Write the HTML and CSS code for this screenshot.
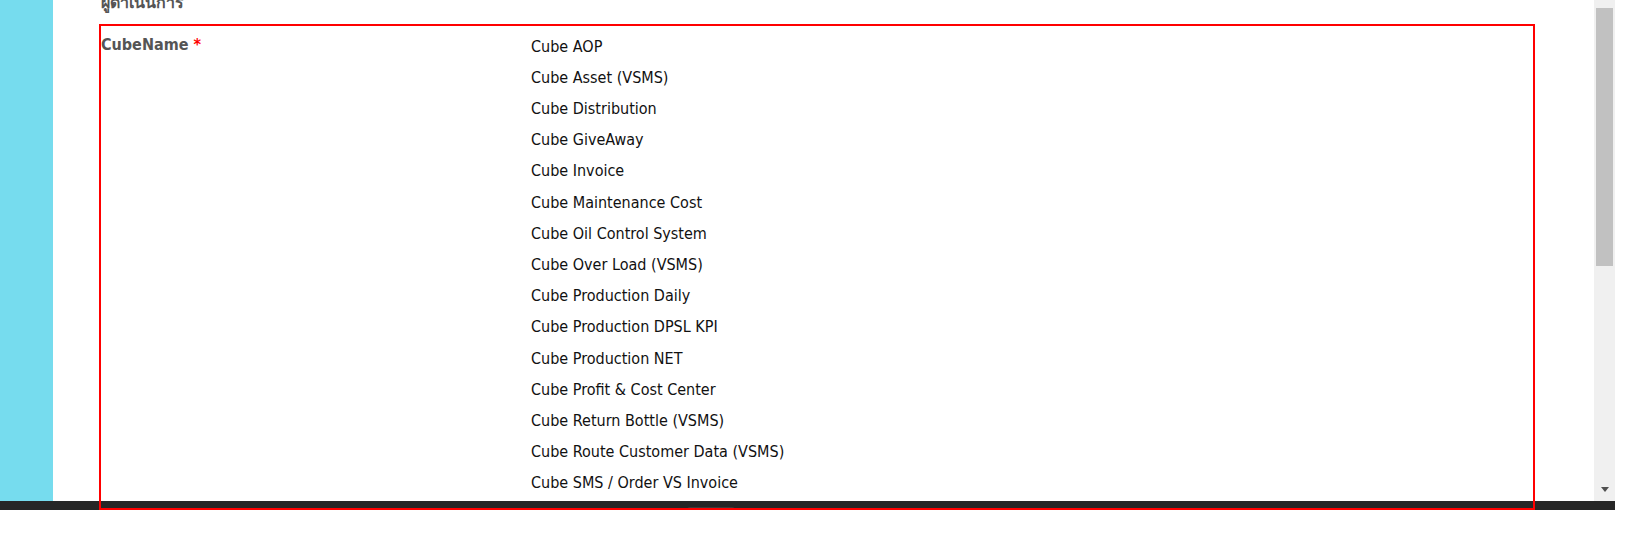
FILE: index.html
```html
<!DOCTYPE html>
<html lang="th">
<head>
<meta charset="utf-8">
<title>CubeName</title>
<link rel="stylesheet" href="styles.css">
</head>
<body>
<div class="frame">
  <div class="viewport">
    <aside class="sidebar"></aside>
    <main class="content">
      <div class="section-title">ผู้ดำเนินการ</div>
      <div class="field">
        <label class="field-label">CubeName <span class="req">*</span></label>
        <ul class="options">
          <li>Cube AOP</li>
          <li>Cube Asset (VSMS)</li>
          <li>Cube Distribution</li>
          <li>Cube GiveAway</li>
          <li>Cube Invoice</li>
          <li>Cube Maintenance Cost</li>
          <li>Cube Oil Control System</li>
          <li>Cube Over Load (VSMS)</li>
          <li>Cube Production Daily</li>
          <li>Cube Production DPSL KPI</li>
          <li>Cube Production NET</li>
          <li>Cube Profit &amp; Cost Center</li>
          <li>Cube Return Bottle (VSMS)</li>
          <li>Cube Route Customer Data (VSMS)</li>
          <li>Cube SMS / Order VS Invoice</li>
        </ul>
      </div>
    </main>
    <div class="vscroll">
      <div class="vscroll-thumb"></div>
      <div class="vscroll-arrow"></div>
    </div>
  </div>
  <div class="hbar"><div class="hbar-tab"></div></div>
</div>
<div class="highlight"></div>
</body>
</html>
```

FILE: styles.css
```css
html, body {
  margin: 0;
  padding: 0;
  background: #ffffff;
}

body {
  width: 1635px;
  height: 535px;
  overflow: hidden;
  position: relative;
  font-family: "DejaVu Sans Condensed", "DejaVu Sans", sans-serif;
  font-stretch: condensed;
  font-size: 16px;
}

.frame {
  width: 1615px;
  height: 510px;
  display: flex;
  flex-direction: column;
}

.viewport {
  height: 501px;
  display: flex;
  flex-direction: row;
}

.sidebar {
  width: 53px;
  flex: 0 0 53px;
  background: #76dcee;
}

.content {
  flex: 1 1 auto;
  overflow: hidden;
  background: #ffffff;
  padding-left: 48px;
}

.section-title {
  font-weight: bold;
  color: #555555;
  line-height: 18px;
  margin-top: -6px;
}

.field {
  display: flex;
  flex-direction: row;
  padding-top: 17px;
}

.field-label {
  width: 430px;
  flex: 0 0 430px;
  font-weight: bold;
  color: #555555;
  line-height: 31.2px;
}

.req {
  color: #ff0000;
}

.options {
  list-style: none;
  margin: 0;
  padding: 1.5px 0 0 0;
  color: #111111;
  line-height: 31.2px;
}

.vscroll {
  width: 21px;
  flex: 0 0 21px;
  background: #f0f0f0;
  display: flex;
  flex-direction: column;
  align-items: center;
  box-sizing: border-box;
  padding-top: 8px;
}

.vscroll-thumb {
  width: 17px;
  height: 258px;
  background: #c1c1c1;
}

.vscroll-arrow {
  margin-top: auto;
  margin-bottom: 9px;
  width: 0;
  height: 0;
  border-left: 4.5px solid transparent;
  border-right: 4.5px solid transparent;
  border-top: 5px solid #505050;
}

.hbar {
  height: 9px;
  background: #262626;
  display: flex;
  padding-left: 687px;
  align-items: flex-end;
}

.hbar-tab {
  width: 48px;
  height: 3px;
  background: #3a3a3a;
  border-radius: 4px 4px 0 0;
}

.highlight {
  position: absolute;
  left: 99px;
  top: 24px;
  width: 1436px;
  height: 486px;
  box-sizing: border-box;
  border: 2px solid #ff0000;
  pointer-events: none;
}
```
